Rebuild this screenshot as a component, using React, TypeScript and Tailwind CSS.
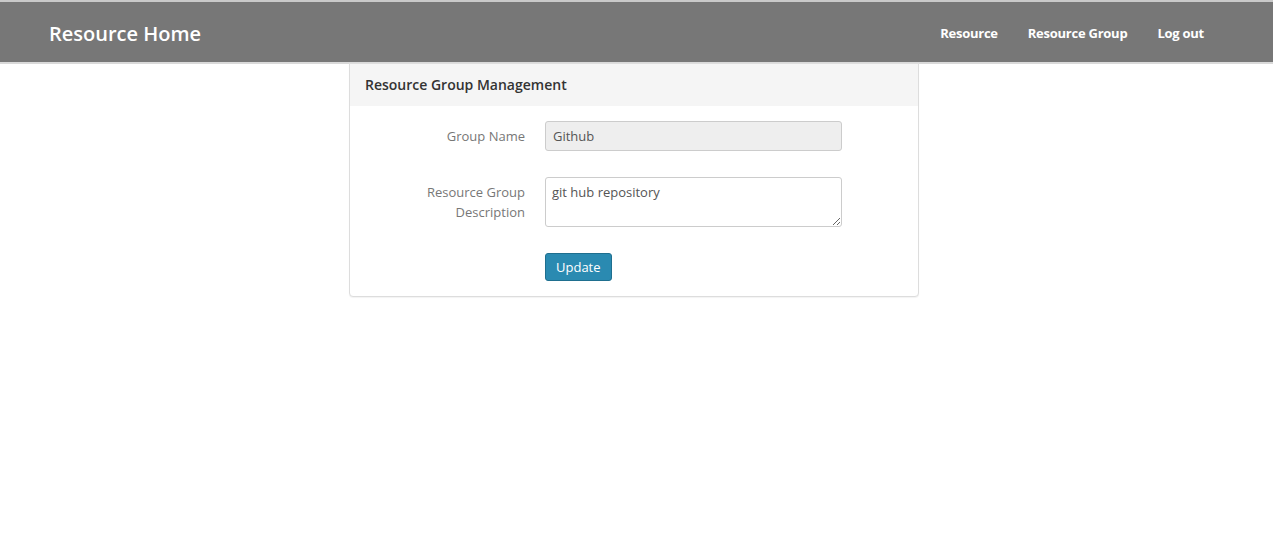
export default function App() {
  return (
    <div className="min-h-[549px] bg-white font-['Open_Sans',_'Liberation_Sans',_sans-serif]">
      {/* Navbar */}
      <nav className="h-[64px] bg-[#777777] border-t-2 border-t-[#c9c9c9] border-b-2 border-b-[#d9d9d9] flex items-center justify-between pl-[49px] pr-[54px] pt-[3px]">
        <span className="text-white text-[20px] font-semibold">Resource Home</span>
        <ul className="flex items-center pt-[1px]">
          <li className="px-[15px] text-white text-[13px] font-bold tracking-[-0.25px]">Resource</li>
          <li className="px-[15px] text-white text-[13px] font-bold tracking-[-0.25px]">Resource Group</li>
          <li className="px-[15px] text-white text-[13px] font-bold tracking-[-0.25px]">Log out</li>
        </ul>
      </nav>

      {/* Panel */}
      <div className="ml-[349px] w-[570px] -mt-[1px] border border-[#dddddd] rounded-b-[4px] shadow-[0_1px_1px_rgba(0,0,0,0.05)] bg-white">
        <div className="h-[42px] bg-[#f5f5f5] px-[15px] flex items-center text-[14px] text-[#333333] font-semibold pb-[1px]">
          Resource Group Management
        </div>
        <div className="pt-[15px] pb-[15px]">
          <div className="grid grid-cols-[175px_297px] gap-x-[20px] items-start">
            <label className="text-right text-[13px] text-[#777777] pt-[5px] leading-[20px]">Group Name</label>
            <div className="h-[30px] bg-[#eeeeee] border border-[#cccccc] rounded-[3px] px-[7px] pt-[1px] flex items-center text-[13px] text-[#555555]">
              Github
            </div>
          </div>
          <div className="grid grid-cols-[175px_297px] gap-x-[20px] items-start mt-[26px]">
            <label className="text-right text-[13px] text-[#777777] pt-[5px] leading-[20px]">
              Resource Group
              <br />
              Description
            </label>
            <textarea
              className="h-[50px] bg-white border border-[#cccccc] rounded-[3px] px-[6px] py-[4px] text-[13px] leading-[20px] text-[#555555] outline-none"
              defaultValue="git hub repository"
            />
          </div>
          <div className="grid grid-cols-[175px_297px] gap-x-[20px] mt-[26px]">
            <div />
            <div>
              <button className="h-[28px] px-[10px] pt-[1px] bg-[#2a8ab1] border border-[#1f6f8f] rounded-[3px] text-white text-[13px]">
                Update
              </button>
            </div>
          </div>
        </div>
      </div>
    </div>
  );
}
